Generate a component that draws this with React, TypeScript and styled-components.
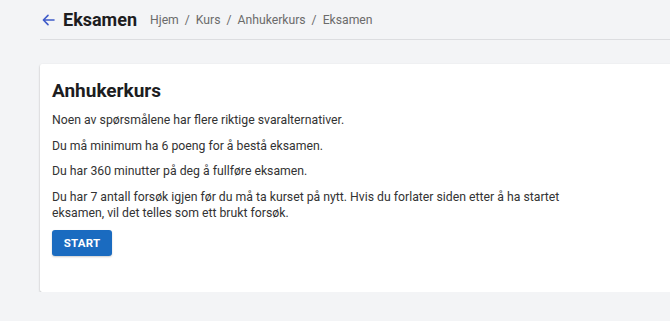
import styled, { createGlobalStyle } from "styled-components";

const GlobalStyle = createGlobalStyle`
  html, body {
    margin: 0;
    padding: 0;
    background: #f3f4f6;
    overflow: hidden;
  }
  body {
    font-family: Roboto, "Liberation Sans", Arial, sans-serif;
    color: #222;
  }
`;

const crumbs = ["Hjem", "Kurs", "Anhukerkurs", "Eksamen"];

const rules = [
  "Noen av spørsmålene har flere riktige svaralternativer.",
  "Du må minimum ha 6 poeng for å bestå eksamen.",
  "Du har 360 minutter på deg å fullføre eksamen.",
  "Du har 7 antall forsøk igjen før du må ta kurset på nytt. Hvis du forlater siden etter å ha startet eksamen, vil det telles som ett brukt forsøk.",
];

export default function App() {
  return (
    <>
      <GlobalStyle />
      <Page>
        <Header>
          <BackButton aria-label="Tilbake">
            <svg width="13" height="12" viewBox="0 0 13 12" fill="none">
              <path
                d="M12 6H1.6M6 1.4L1.4 6 6 10.6"
                stroke="#3f5bc9"
                strokeWidth="1.6"
                strokeLinecap="round"
                strokeLinejoin="round"
              />
            </svg>
          </BackButton>
          <Title>Eksamen</Title>
          <Breadcrumb>
            {crumbs.map((c, i) => (
              <Crumb key={c}>
                {i > 0 && <Sep>/</Sep>}
                {c}
              </Crumb>
            ))}
          </Breadcrumb>
        </Header>
        <Card>
          <CardTitle>Anhukerkurs</CardTitle>
          <Body>
            {rules.map((r) => (
              <Paragraph key={r}>{r}</Paragraph>
            ))}
          </Body>
          <StartButton>Start</StartButton>
        </Card>
      </Page>
    </>
  );
}

const Page = styled.div`
  padding-left: 40px;
  width: 700px;
`;

const Header = styled.header`
  display: flex;
  align-items: center;
  height: 39px;
  border-bottom: 1px solid #dcdde0;
  margin-bottom: 24px;
`;

const BackButton = styled.button`
  display: flex;
  align-items: center;
  justify-content: center;
  width: 14px;
  height: 16px;
  margin: 1px 8px 0 1px;
  padding: 0;
  border: none;
  background: none;
  cursor: pointer;
`;

const Title = styled.h1`
  margin: 0 13px 0 0;
  font-size: 18px;
  font-weight: 700;
  color: #1d1d1f;
`;

const Breadcrumb = styled.nav`
  display: flex;
  align-items: center;
  font-size: 12.2px;
  color: #6b6b6b;
  padding-top: 1px;
`;

const Crumb = styled.span`
  display: inline-flex;
`;

const Sep = styled.span`
  margin: 0 6px;
`;

const Card = styled.section`
  width: 640px;
  background: #fff;
  padding: 16px 12px 36px;
  box-shadow: 0 1px 2px rgba(0, 0, 0, 0.3);
  border-radius: 2px;
`;

const CardTitle = styled.h2`
  margin: 0 0 10px;
  font-size: 19px;
  font-weight: 700;
  line-height: 22px;
  color: #1d1d1f;
`;

const Body = styled.div`
  max-width: 560px;
`;

const Paragraph = styled.p`
  margin: 0 0 9.5px;
  font-size: 12.25px;
  line-height: 16px;
  color: #333;
`;

const StartButton = styled.button`
  display: block;
  margin-top: 8px;
  width: 60px;
  height: 26px;
  padding: 0;
  border: none;
  border-radius: 3px;
  background: #1a6bc0;
  color: #fff;
  font-family: Roboto, "Liberation Sans", Arial, sans-serif;
  font-size: 11.5px;
  font-weight: 700;
  text-transform: uppercase;
  letter-spacing: 0.2px;
  box-shadow: 0 1px 2px rgba(0, 0, 0, 0.2);
`;
